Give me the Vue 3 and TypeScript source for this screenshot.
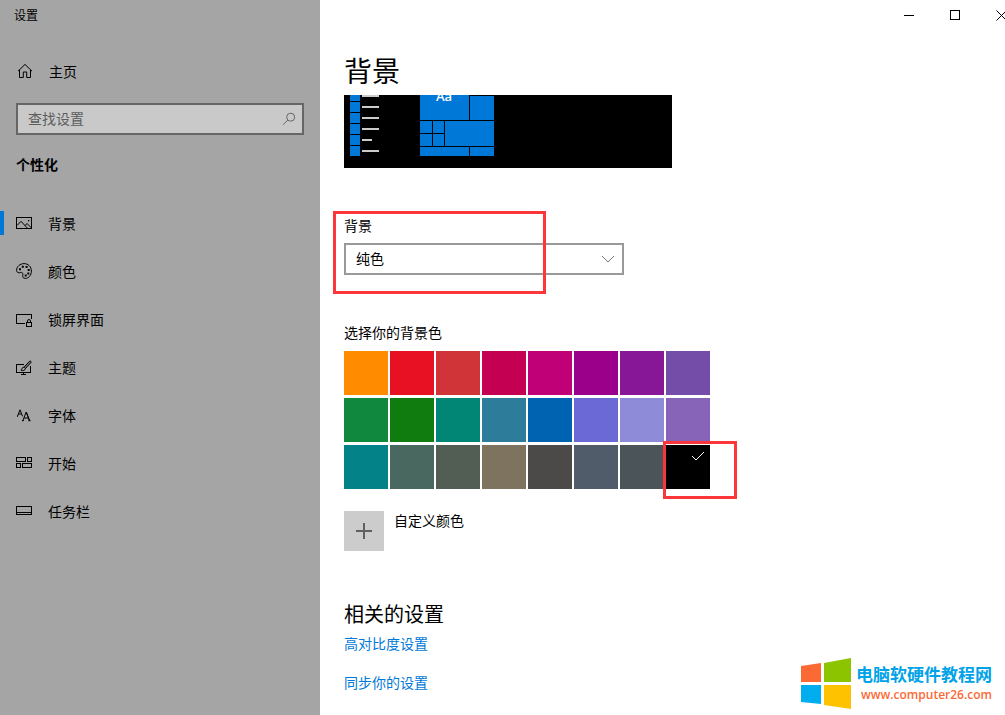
<script setup lang="ts">
import { ref } from 'vue'

interface NavItem {
  id: string
  label: string
}

const navItems: NavItem[] = [
  { id: 'background', label: '背景' },
  { id: 'colors', label: '颜色' },
  { id: 'lock', label: '锁屏界面' },
  { id: 'themes', label: '主题' },
  { id: 'fonts', label: '字体' },
  { id: 'start', label: '开始' },
  { id: 'taskbar', label: '任务栏' },
]

const swatches: string[] = [
  '#ff8c00', '#e81123', '#d13438', '#c30052', '#bf0077', '#9a0089', '#881798', '#744da9',
  '#10893e', '#107c10', '#018574', '#2d7d9a', '#0063b1', '#6b69d6', '#8e8cd8', '#8764b8',
  '#038387', '#486860', '#525e54', '#7e735f', '#4c4a48', '#515c6b', '#4a5459', '#000000',
]

const activeNav = ref('background')
const selectedColor = ref('#000000')
const backgroundType = ref('solid')
const query = ref('')
</script>

<template>
  <div class="window">
    <aside class="sidebar">
      <div class="app-title">设置</div>
      <a class="home" href="#home">
        <svg class="icon" width="16" height="16" viewBox="0 0 16 16" aria-hidden="true">
          <path d="M1 8.2 8 1.4 15 8.2M2.5 7v7.5h3.8V9h3.4v5.5h3.8V7" />
        </svg>
        <span>主页</span>
      </a>
      <form class="search" role="search" @submit.prevent>
        <input v-model="query" type="text" aria-label="查找设置" placeholder="查找设置" />
        <button type="submit" aria-label="搜索">
          <svg width="14" height="14" viewBox="0 0 14 14" aria-hidden="true">
            <circle cx="8.7" cy="5.2" r="4" />
            <path d="M5.8 8 1 12.8" />
          </svg>
        </button>
      </form>
      <h2 class="category">个性化</h2>
      <nav class="nav">
        <a
          v-for="item in navItems"
          :key="item.id"
          :href="'#' + item.id"
          :class="{ active: activeNav === item.id }"
          @click.prevent="activeNav = item.id"
        >
          <svg class="icon" width="16" height="16" viewBox="0 0 16 16" aria-hidden="true">
            <template v-if="item.id === 'background'">
              <path class="crisp" d="M.5 2.5h15v11H.5z" />
              <path d="M1 10.500 5 6.300l6.500 7M9 10.700l2-2.200 4.300 4.300" />
              <path class="fill" d="M12 5h1.300v1.300H12z" />
            </template>
            <template v-else-if="item.id === 'colors'">
              <path d="M8 .6C12.300.6 15.400 3.800 15.400 8c0 4.500-2.900 7.400-6.100 7.400-1.900 0-2.700-1.200-2.600-2.700.1-1.300.4-2.300-.4-3-.9-.8-1.900.1-3.100.1C1.600 9.800.6 8.900.6 7.300.6 3.600 4 .6 8 .6Z" />
              <path class="fill" d="M3 5.200h2V7.200H3zM5.800 2.700h2v2h-2zM9.600 3h2v2h-2zM11.700 6h2v2h-2zM11.300 9.500h2v2h-2zM8.700 11.600h2v2h-2z" />
            </template>
            <template v-else-if="item.id === 'lock'">
              <path class="crisp" d="M9 12.500H.5v-9h15V8M10.500 11.500h5v4h-5z" />
              <path d="M11.500 11.500V10a1.500 1.500 0 0 1 3 0v1.500" />
            </template>
            <template v-else-if="item.id === 'themes'">
              <path class="crisp" d="M8 5.500H.5v8h14V7M7.500 13.500v2M5 15.500h5" />
              <path fill="#777777" d="M14.900 2.400q-.7-.8-1.500 0L8 8.200l1.400 1.400 5.400-5.900q.7-.7.1-1.300Z" />
              <path d="M8 8.200c-1.400 0-1.900.8-2 1.700-.1.700-.5 1.100-1.100 1.200 1.800 1.100 4.300.4 4.500-1.500" />
            </template>
            <template v-else-if="item.id === 'fonts'">
              <path d="M1.500 9.300 4 2.800 6.500 9.300M2.500 7h3M6.700 14 10.200 5l3.400 9M8 11h4.400M6 13.700h1.800M12.300 13.700h2.200M1 9.200h1" />
              <path d="m10.400 5.500 3.400 8.500" />
            </template>
            <template v-else-if="item.id === 'start'">
              <path class="crisp" d="M.5 2.500h9v4h-9zM11.500 2.500h4v4h-4zM.5 8.500h4v4h-4zM6.500 8.500h9v4h-9z" />
            </template>
            <template v-else>
              <path class="crisp" d="M.5 3.500h15v8H.5zM.5 9.500h15" />
            </template>
          </svg>
          <span>{{ item.label }}</span>
        </a>
      </nav>
    </aside>

    <main class="main">
      <header class="titlebar">
        <button type="button" aria-label="最小化">
          <svg width="11" height="11" viewBox="0 0 11 11"><path class="crisp" d="M0 5.500h10" /></svg>
        </button>
        <button type="button" aria-label="最大化">
          <svg width="11" height="11" viewBox="0 0 11 11"><path class="crisp" d="M.5.5h9v9h-9z" /></svg>
        </button>
        <button type="button" aria-label="关闭">
          <svg width="11" height="11" viewBox="0 0 11 11"><path d="m.5.5 10 10M10.500.5l-10 10" /></svg>
        </button>
      </header>

      <div class="content">
        <h1>背景</h1>
        <div class="preview">
          <svg width="160" height="62" viewBox="0 0 160 62" aria-hidden="true">
            <path
              fill="#0078d7"
              d="M6 0h10v6H6zM6 7h10v10H6zM6 18h10v10H6zM6 29h10v10H6zM6 40h10v10H6zM6 51h10v10H6zM76 0h49v25H76zM126 1h24v24h-24zM76 26h12v12H76zM89 26h11v12H89zM76 39h12v12H76zM89 39h11v12H89zM101 26h49v25h-49zM76 52h49v9H76zM126 52h24v9h-24z"
            />
            <path
              fill="#cccccc"
              d="M18 0h17v2H18zM18 11h17v2H18zM18 22h17v2H18zM18 33h17v2H18zM18 44h10v2H18zM18 55h17v2H18z"
            />
            <text x="92" y="6" fill="#ffffff" font-size="13">Aa</text>
          </svg>
        </div>

        <div class="field">
          <label for="bg-type">背景</label>
          <div class="select">
            <select id="bg-type" v-model="backgroundType">
              <option value="picture">图片</option>
              <option value="solid">纯色</option>
              <option value="slideshow">幻灯片放映</option>
            </select>
            <svg width="14" height="8" viewBox="0 0 14 8" aria-hidden="true"><path d="m1 1 6 6 6-6" /></svg>
          </div>
          <span class="highlight highlight-field"></span>
        </div>

        <h3 id="swatch-title">选择你的背景色</h3>
        <div class="swatches" role="group" aria-labelledby="swatch-title">
          <div v-for="color in swatches" :key="color" class="cell">
            <button
              type="button"
              class="swatch"
              :style="{ backgroundColor: color }"
              :aria-label="color"
              :aria-pressed="selectedColor === color"
              @click="selectedColor = color"
            >
              <svg v-if="selectedColor === color" width="14" height="10" viewBox="0 0 14 10">
                <path d="m1 5 4 4 8-8" />
              </svg>
            </button>
            <span v-if="color === '#000000'" class="highlight highlight-swatch"></span>
          </div>
        </div>

        <div class="custom">
          <button id="custom-color" type="button" aria-label="自定义颜色">
            <svg width="16" height="16" viewBox="0 0 16 16" aria-hidden="true"><path d="M8 0v16M0 8h16" /></svg>
          </button>
          <label for="custom-color">自定义颜色</label>
        </div>

        <h2>相关的设置</h2>
        <div class="links">
          <a href="#contrast">高对比度设置</a>
          <a href="#sync">同步你的设置</a>
        </div>
      </div>
    </main>

    <div class="watermark">
      <svg width="50" height="51" viewBox="0 0 50 51" aria-hidden="true">
        <path fill="#fb6a35" d="M0 8 20 5v19H0z" />
        <path fill="#8dc400" d="M23 5 50 0v24H23z" />
        <path fill="#00aeef" d="M0 27h20v19L0 44z" />
        <path fill="#ffc200" d="M23 27h27v24l-27-4z" />
      </svg>
      <div class="brand">
        <strong>电脑软硬件教程网</strong>
        <span>www.computer26.com</span>
      </div>
    </div>
  </div>
</template>

<style>
body {
  margin: 0;
}
</style>

<style scoped>
.window {
  position: relative;
  display: flex;
  min-height: 100vh;
  overflow: hidden;
  background: #ffffff;
  color: #000000;
  font-family: "Noto Sans CJK SC", "Liberation Sans", sans-serif;
  font-size: 14px;
  line-height: 20px;
}

* {
  box-sizing: border-box;
}

h1,
h2,
h3 {
  margin: 0;
  font-weight: 400;
}

a {
  color: inherit;
  text-decoration: none;
}

button {
  padding: 0;
  border: 0;
  background: none;
  font: inherit;
}

svg {
  display: block;
  flex: none;
}

.crisp {
  shape-rendering: crispEdges;
}

.sidebar {
  flex: none;
  width: 320px;
  background: #a5a5a5;
}

.app-title {
  padding: 5px 14px;
  font-size: 12px;
}

.home {
  display: flex;
  align-items: center;
  gap: 16px;
  height: 48px;
  margin-top: 17px;
  padding-left: 17px;
}

.icon {
  fill: none;
  stroke: #000000;
}

.icon .fill {
  fill: #000000;
  stroke: none;
}

.search {
  display: flex;
  height: 32px;
  margin: 8px 16px 19px;
  border: 2px solid #666666;
  background: #c9c9c9;
}

.search input {
  flex: 1;
  min-width: 0;
  padding: 0 10px 2px;
  border: 0;
  outline: 0;
  background: none;
  color: #000000;
  font: inherit;
}

.search input::placeholder {
  color: #5c5c5c;
  opacity: 1;
}

.search button {
  display: grid;
  place-items: center;
  width: 26px;
}

.search svg {
  fill: none;
  stroke: #666666;
}

.category {
  padding-left: 16px;
  font-size: 14px;
  font-weight: 700;
}

.nav {
  display: flex;
  flex-direction: column;
  margin-top: 25px;
}

.nav a {
  display: flex;
  align-items: center;
  gap: 16px;
  height: 48px;
  padding-left: 16px;
}

.nav a.active {
  background: linear-gradient(#0078d7, #0078d7) left center / 4px 24px no-repeat;
}

.main {
  flex: 1;
  min-width: 0;
}

.titlebar {
  display: flex;
  justify-content: flex-end;
  height: 30px;
  margin-right: -19px;
}

.titlebar button {
  display: grid;
  place-items: center;
  width: 46px;
}

.titlebar svg {
  fill: none;
  stroke: #000000;
}

.content {
  padding: 20px 24px;
}

h1 {
  margin-bottom: 5px;
  font-size: 28px;
  line-height: 40px;
}

.preview {
  max-width: 328px;
  height: 73px;
  overflow: hidden;
  background: #000000;
}

.preview text {
  font-family: "Open Sans", sans-serif;
  font-weight: 600;
}

.field {
  position: relative;
  max-width: 280px;
  margin: 47px 0;
}

.field label {
  display: block;
  margin-bottom: 8px;
}

.select {
  position: relative;
}

.select select {
  display: block;
  width: 100%;
  height: 32px;
  padding: 0 10px 2px;
  border: 2px solid #999999;
  border-radius: 0;
  appearance: none;
  background: #ffffff;
  color: #000000;
  font: inherit;
}

.select svg {
  position: absolute;
  top: 12px;
  right: 9px;
  fill: none;
  stroke: #777777;
  pointer-events: none;
}

.highlight {
  position: absolute;
  border: 3px solid #fb373b;
  pointer-events: none;
}

.highlight-field {
  top: -4px;
  left: -11px;
  width: 213px;
  height: 83px;
}

.highlight-swatch {
  top: -4px;
  left: -3px;
  width: 74px;
  height: 58px;
}

h3 {
  font-size: 14px;
}

.swatches {
  display: grid;
  grid-template-columns: repeat(8, 44px);
  gap: 3px 2px;
  margin: 9px 0 22px;
}

.cell {
  position: relative;
}

.swatch {
  display: flex;
  justify-content: flex-end;
  width: 44px;
  height: 44px;
  padding: 6px 5px;
}

.swatch svg {
  fill: none;
  stroke: #ffffff;
}

.custom {
  display: flex;
  gap: 10px;
  margin-bottom: 49px;
}

.custom label {
  line-height: 18px;
}

.custom button {
  display: grid;
  place-items: center;
  width: 40px;
  height: 40px;
  background: #cccccc;
}

.custom svg {
  stroke: #333333;
  stroke-width: 2;
  shape-rendering: crispEdges;
  opacity: 0.7;
}

.content h2 {
  margin-bottom: 5px;
  font-size: 20px;
  line-height: 28px;
}

.links {
  display: flex;
  flex-direction: column;
  align-items: flex-start;
  gap: 19px;
  color: #0078d7;
}

.watermark {
  position: absolute;
  right: 13px;
  bottom: 6px;
  display: flex;
  gap: 5px;
}

.brand {
  display: flex;
  flex-direction: column;
  align-items: flex-end;
  padding-top: 4px;
}

.brand strong {
  color: #00a2e8;
  font-size: 17px;
  line-height: 24px;
}

.brand span {
  color: #fb6a35;
  font-family: "Open Sans", sans-serif;
  font-size: 12px;
  font-weight: 600;
  line-height: 18px;
}
</style>
